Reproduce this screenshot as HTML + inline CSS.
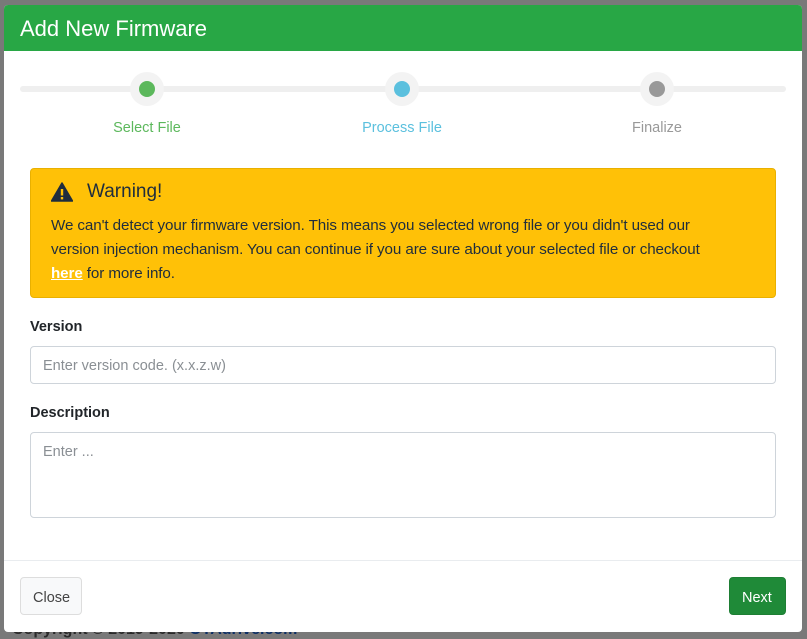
<!DOCTYPE html>
<html><head><style>
*{box-sizing:border-box}
body{margin:0;width:807px;height:638px;background:#797979;font-family:"Liberation Sans",sans-serif;position:relative;overflow:hidden}
.bgtext{position:absolute;left:12px;top:621px;font-size:16px;font-weight:bold;color:#2a2a2a}
.bgtext b{color:#0c2f66}
.modal{position:absolute;left:4px;top:5px;width:798px;height:627px;background:#fff;border-radius:4px;overflow:hidden}
.hdr{height:46px;background:#28a745;color:#fff;font-size:22px;padding:11px 16px}
.line{position:absolute;left:16px;top:81px;width:766px;height:6px;background:#efefef;border-radius:3px}
.step{position:absolute;top:67px;width:34px;height:34px;border-radius:50%;background:#f3f3f3}
.step i{position:absolute;left:9px;top:9px;width:16px;height:16px;border-radius:50%}
.lbl{position:absolute;top:115px;font-size:14.5px;width:200px;text-align:center}
.alert{position:absolute;left:26px;top:163px;width:746px;height:130px;background:#ffc107;border:1px solid #e9b000;border-radius:4px;color:#1f2d3d;padding:12px 20px}
.alert h5{margin:0 0 11px;font-size:19px;font-weight:normal;display:flex;align-items:center}
.alert p{margin:0;font-size:15.2px;line-height:24px;white-space:nowrap;letter-spacing:-0.1px}
.alert a{color:#fff;font-weight:bold;text-decoration:underline}
.fl{position:absolute;left:26px;font-size:14.5px;font-weight:bold;color:#212529}
.inp{position:absolute;left:26px;width:746px;border:1px solid #ced4da;border-radius:4px;color:#8a8f94;font-size:14.5px;padding:11px 12px}
.foot{position:absolute;left:0;top:555px;width:798px;border-top:1px solid #e9ecef}
.btn{position:absolute;top:572px;height:38px;border-radius:4px;font-size:14.5px;padding:12px 12px}
</style></head><body>
<div class="bgtext">Copyright © 2019-2020 <b>OTAdrive.com</b></div>
<div class="modal">
<div class="hdr">Add New Firmware</div>
<div class="line"></div>
<div class="step" style="left:126px"><i style="background:#5cb85c"></i></div>
<div class="step" style="left:381px"><i style="background:#5bc0de"></i></div>
<div class="step" style="left:636px"><i style="background:#999"></i></div>
<div class="lbl" style="left:43px;color:#5cb85c">Select File</div>
<div class="lbl" style="left:298px;color:#5bc0de">Process File</div>
<div class="lbl" style="left:553px;color:#999">Finalize</div>
<div class="alert">
<h5><svg width="22" height="20" viewBox="0 0 22 20" style="margin-right:14px"><path d="M11 1L21.5 19H0.5Z" fill="#1f2d3d" stroke="#1f2d3d" stroke-linejoin="round" stroke-width="1.5"/><rect x="9.8" y="7" width="2.4" height="6.5" fill="#ffc107"/><rect x="9.8" y="15" width="2.4" height="2.4" fill="#ffc107"/></svg>Warning!</h5>
<p>We can't detect your firmware version. This means you selected wrong file or you didn't used our<br>version injection mechanism. You can continue if you are sure about your selected file or checkout<br><a>here</a> for more info.</p>
</div>
<div class="fl" style="top:314px">Version</div>
<div class="inp" style="top:341px;height:38px">Enter version code. (x.x.z.w)</div>
<div class="fl" style="top:400px">Description</div>
<div class="inp" style="top:427px;height:86px">Enter ...</div>
<div class="foot"></div>
<div class="btn" style="left:16px;width:62px;background:#f8f9fa;border:1px solid #ddd;color:#444">Close</div>
<div class="btn" style="left:725px;width:57px;background:#1f8a38;color:#fff;border:1px solid #1e7e34">Next</div>
</div>
</body></html>
